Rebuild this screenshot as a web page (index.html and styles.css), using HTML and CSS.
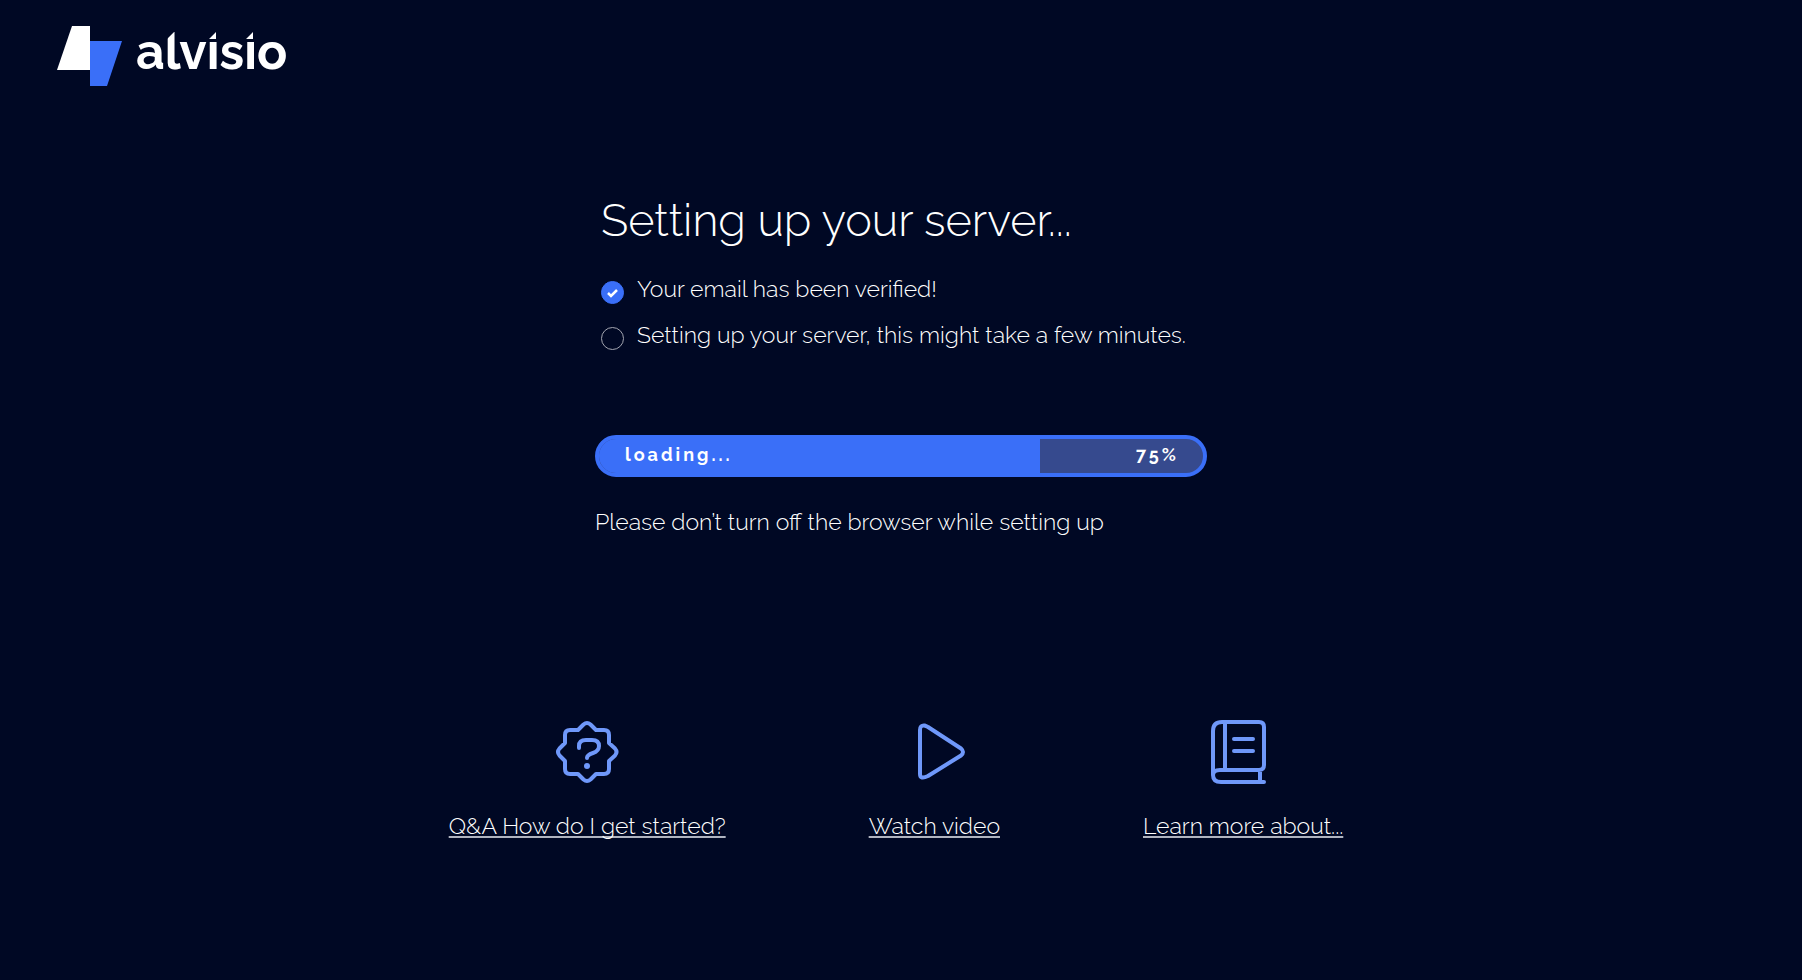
FILE: index.html
```
<!DOCTYPE html>
<html lang="en">
<head>
    <meta charset="UTF-8">
    <meta name="viewport" content="width=device-width, initial-scale=1.0">
    <title>Alvisio - Setting up your server</title>
    <link rel="stylesheet" href="styles.css">
</head>
<body>
    <header class="header">
        <svg class="logo" viewBox="0 -10 260 80" role="img" aria-label="alvisio">
            <polygon points="15,0 33,0 33,44 0,44" fill="#fff"/>
            <polygon points="33,15 65,15 50,60 33,60" fill="#3a6ff8"/>
            <text class="logo-text" x="79" y="43">alvisio</text>
            <!-- slanted cuts on the l and the two i dots -->
            <path class="logo-cut" d="M109 4 H119 L109 14 Z M149 4 H163 V15 H149 Z M186 4 H200 V15 H186 Z"/>
            <path d="M152 13 L159 6 V13 Z M189 13 L196 6 V13 Z" fill="#fff"/>
        </svg>
    </header>

    <main class="main">
        <section class="setup">
            <div class="status">
                <h1>Setting up your server...</h1>
                <div class="step">
                    <input type="checkbox" id="step-email" checked>
                    <label for="step-email">Your email has been verified!</label>
                </div>
                <div class="step">
                    <input type="checkbox" id="step-server">
                    <label for="step-server">Setting up your server, this might take a few minutes.</label>
                </div>
            </div>

            <div class="progress" role="progressbar" aria-label="Server setup" aria-valuenow="75" aria-valuemin="0" aria-valuemax="100">
                <div class="progress-fill" style="width: 73%">loading...</div>
                <div class="progress-value">75%</div>
            </div>
            <p class="note">Please don’t turn off the browser while setting up</p>
        </section>

        <nav class="links">
            <a href="#faq">
                <svg class="icon" viewBox="0 0 64 64">
                    <path d="M28.500 4.500 Q32 1.500 35.500 4.500 L41 10 H49 Q54 10 54 15 V23 L60 28.500 Q63 32 60 35.500 L54 41 V49 Q54 54 49 54 H41 L35.500 59.500 Q32 62.500 28.500 59.500 L23 54 H15 Q10 54 10 49 V41 L4.500 35.500 Q1.500 32 4.500 28.500 L10 23 V15 Q10 10 15 10 H23 Z"/>
                    <path d="M24 28 V26 Q24 20 31 20 H37 Q44 20 44 26 Q44 31 38 33 Q32 35 32 38"/>
                    <circle class="dot" cx="32" cy="46" r="3"/>
                </svg>
                <span>Q&amp;A How do I get started?</span>
            </a>
            <a href="#video">
                <svg class="icon" viewBox="0 0 64 64">
                    <path d="M18 10 Q18 5 22.500 5.500 Q24 6 26 7 L59 28.500 Q63 32 59 35.500 L26 56 Q18 60 18 54 Z"/>
                </svg>
                <span>Watch video</span>
            </a>
            <a href="#docs">
                <svg class="icon" viewBox="0 0 64 64">
                    <path d="M53 62 H10 Q2 62 2 55 V11 Q2 2 11 2 H48 Q53 2 53 7 V45 Q53 50 48 50 H9 Q2 50 2 55 M14 3 V49 M49 51 V61 M23 19 H42 M23 31 H42"/>
                </svg>
                <span>Learn more about...</span>
            </a>
        </nav>
    </main>
</body>
</html>
```
FILE: styles.css
```
* {
    box-sizing: border-box;
}

body {
    margin: 0;
    min-height: 100vh;
    background-color: #000824;
    color: #fff;
    font-family: Raleway, Lato, sans-serif;
    font-size: 23px;
    font-weight: 300;
    line-height: 32px;
}

.header {
    padding: 16px 57px 0;
}

.logo {
    display: block;
    width: 260px;
    height: 80px;
}

.logo-text {
    fill: #fff;
    font-size: 50px;
    font-weight: 700;
    line-height: 60px;
}

.logo-cut {
    fill: #000824;
}

.main {
    display: flex;
    flex-direction: column;
    align-items: center;
    padding: 94px 24px 40px;
}

.setup {
    width: 100%;
    max-width: 612px;
}

.status {
    padding-left: 6px;
}

h1 {
    margin: 0 0 21px;
    font-size: 45px;
    font-weight: 300;
    line-height: 62px;
}

.step {
    display: flex;
    align-items: center;
    gap: 13px;
    margin-bottom: 14px;
}

.step input {
    appearance: none;
    flex: none;
    width: 23px;
    height: 23px;
    margin: 6px 0 0;
    border: 1px solid #a3a5b0;
    border-radius: 50%;
}

.step input:checked {
    border-color: #3a6ff8;
    background: #3a6ff8 url("data:image/svg+xml,%3Csvg xmlns='http://www.w3.org/2000/svg' viewBox='0 0 21 21'%3E%3Cpath d='M6 11 L9 14 L15 8' fill='none' stroke='white' stroke-width='2.500'/%3E%3C/svg%3E") center no-repeat;
}

.progress {
    display: flex;
    height: 42px;
    margin-top: 84px;
    border: 4px solid #3a6ff8;
    border-radius: 21px;
    background-color: #364a8e;
    overflow: hidden;
    font-size: 18px;
    font-weight: 700;
    line-height: 32px;
    letter-spacing: 3px;
}

.progress-fill {
    padding-left: 26px;
    background-color: #3a6ff8;
}

.progress-value {
    flex: 1;
    padding-right: 24px;
    text-align: right;
}

.note {
    margin: 29px 0 0;
}

.links {
    display: flex;
    flex-wrap: wrap;
    justify-content: center;
    gap: 40px 143px;
    margin-top: 182px;
    padding-right: 10px;
}

.links a {
    display: flex;
    flex-direction: column;
    align-items: center;
    gap: 26px;
    color: #fff;
    text-decoration: none;
}

.links span {
    text-decoration: underline 2px #b0b4c0;
    text-decoration-skip-ink: none;
    text-underline-offset: 2px;
}

.icon {
    width: 64px;
    height: 64px;
    fill: none;
    stroke: #6f98fa;
    stroke-width: 4;
    stroke-linecap: round;
    stroke-linejoin: round;
}

.icon .dot {
    fill: #6f98fa;
    stroke: none;
}
```
